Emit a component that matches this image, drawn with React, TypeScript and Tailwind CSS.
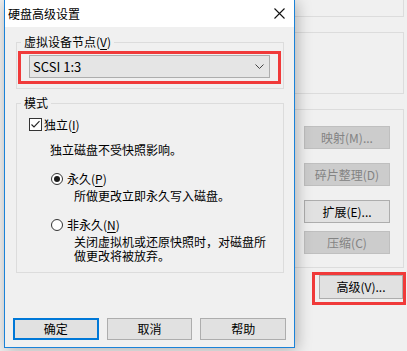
import React from "react"

const font = { fontFamily: '"Noto Sans CJK SC", "Noto Sans", sans-serif' }

function Key({ k }: { k: string }) {
  return (
    <>
      (<span className="underline underline-offset-2">{k}</span>)
    </>
  )
}

function SideButton({ label, disabled, className = "" }: { label: React.ReactNode; disabled?: boolean; className?: string }) {
  return (
    <div
      className={`flex h-[23px] w-[86px] items-center justify-center border text-[12px] leading-[14px] ${
        disabled ? "border-[#bfbfbf] bg-[#cccccc] text-[#838383]" : "border-[#adadad] bg-[#e1e1e1] text-black"
      } ${className}`}
    >
      {label}
    </div>
  )
}

function Radio({ checked }: { checked?: boolean }) {
  return (
    <svg width="12" height="12" viewBox="0 0 12 12" className="shrink-0">
      <circle cx="6" cy="6" r="5.5" fill="#fff" stroke="#333" strokeWidth="1" />
      {checked && <circle cx="6" cy="6" r="3" fill="#1a1a1a" />}
    </svg>
  )
}

function DialogButton({ label, primary }: { label: string; primary?: boolean }) {
  return (
    <div
      className={`flex h-[22px] w-[86px] items-center justify-center bg-[#e1e1e1] text-[12px] leading-[14px] ${
        primary ? "border-2 border-[#0078d7]" : "border border-[#adadad]"
      }`}
    >
      {label}
    </div>
  )
}

export default function App() {
  return (
    <div className="relative h-[351px] w-[407px] overflow-hidden bg-[#f0f0f0] text-black" style={font}>
      {/* window behind the dialog */}
      <div className="flex flex-col items-end pr-[3px]">
        <div className="h-[17px] w-[200px] border-x border-b border-[#dcdcdc]" />
        <div className="mt-[15px] h-[62px] w-[200px] border border-[#dcdcdc]" />
        <div className="mt-[15px] flex h-[159px] w-[200px] flex-col items-end border border-[#dcdcdc] pr-[13px] pt-[16px]">
          <SideButton disabled label={<>映射(M)...</>} />
          <SideButton disabled className="mt-[14px]" label={<>碎片整理(D)</>} />
          <SideButton className="mt-[14px]" label={<>扩展(E)...</>} />
          <SideButton disabled className="mt-[8px]" label={<>压缩(C)</>} />
        </div>
        <div className="mr-[1px] mt-[7px] flex h-[24px] w-[84px] items-center justify-center border border-[#adadad] bg-[#e1e1e1] text-[12px] leading-[14px]">
          高级(V)...
        </div>
      </div>
      <div className="absolute left-[312px] top-[272px] h-[33px] w-[94px] border-[3px] border-[#f03a3a]" />

      {/* dialog window */}
      <div className="absolute left-[4px] top-0 flex h-[348px] w-[291px] flex-col border-x border-b border-[#1a82d8] bg-[#f0f0f0] shadow-[2px_2px_14px_rgba(0,0,0,0.28)]">
        <div className="flex h-[27px] items-center justify-between bg-white pl-[3px] pr-[9px]">
          <span className="text-[12px] leading-[14px]">硬盘高级设置</span>
          <svg width="11" height="11" viewBox="0 0 11 11">
            <path d="M0.5 0.5L10.5 10.5M10.5 0.5L0.5 10.5" stroke="#111" strokeWidth="1.1" />
          </svg>
        </div>

        <div className="flex flex-col pl-[11px] pr-[10px] pt-[8px]">
          <fieldset className="border border-[#dcdcdc] px-0">
            <legend className="ml-[4px] px-[3px] text-[12px] leading-[14px]">
              虚拟设备节点<Key k="V" />
            </legend>
            <div className="pb-[10px] pl-[12px] pr-[13px] pt-[6px]">
              <div className="flex h-[23px] items-center justify-between border border-[#adadad] bg-[#e5e5e5] pl-[3px] pr-[5px]">
                <span className="text-[13px] leading-[15px]">SCSI 1:3</span>
                <svg width="9" height="5" viewBox="0 0 9 5">
                  <path d="M0.5 0.5L4.5 4.5L8.5 0.5" fill="none" stroke="#444" strokeWidth="1" />
                </svg>
              </div>
            </div>
          </fieldset>

          <fieldset className="mt-[7px] border border-[#dcdcdc] px-0">
            <legend className="ml-[4px] px-[3px] text-[12px] leading-[14px]">模式</legend>
            <div className="flex flex-col pb-[10px] pl-[12px] text-[12px]">
              <div className="mt-[7px] flex h-[15px] items-center gap-[2px]">
                <svg width="13" height="13" viewBox="0 0 13 13" className="shrink-0">
                  <rect x="0.5" y="0.5" width="12" height="12" fill="#fff" stroke="#333" />
                  <path d="M2.5 6.5L5 9L10.5 3.2" fill="none" stroke="#222" strokeWidth="1.1" />
                </svg>
                <span className="leading-[15px]">
                  独立<Key k="I" />
                </span>
              </div>
              <div className="ml-[21px] mt-[11px] leading-[14px]">独立磁盘不受快照影响。</div>

              <div className="ml-[22px] mt-[14px] flex h-[15px] items-center gap-[4px]">
                <Radio checked />
                <span className="leading-[15px]">
                  永久<Key k="P" />
                </span>
              </div>
              <div className="ml-[45px] mt-[3px] leading-[14px]">所做更改立即永久写入磁盘。</div>

              <div className="ml-[22px] mt-[14px] flex h-[15px] items-center gap-[4px]">
                <Radio />
                <span className="leading-[15px]">
                  非永久<Key k="N" />
                </span>
              </div>
              <div className="ml-[45px] mt-[3px] leading-[14px]">关闭虚拟机或还原快照时，对磁盘所</div>
              <div className="ml-[45px] leading-[13px]">做更改将被放弃。</div>
            </div>
          </fieldset>
        </div>

        <div className="mt-[45px] flex gap-[8px] px-[8px]">
          <DialogButton primary label="确定" />
          <DialogButton label="取消" />
          <DialogButton label="帮助" />
        </div>
      </div>
      <div className="absolute left-[18px] top-[51px] h-[33px] w-[263px] border-[3px] border-[#f03a3a]" />
    </div>
  )
}
